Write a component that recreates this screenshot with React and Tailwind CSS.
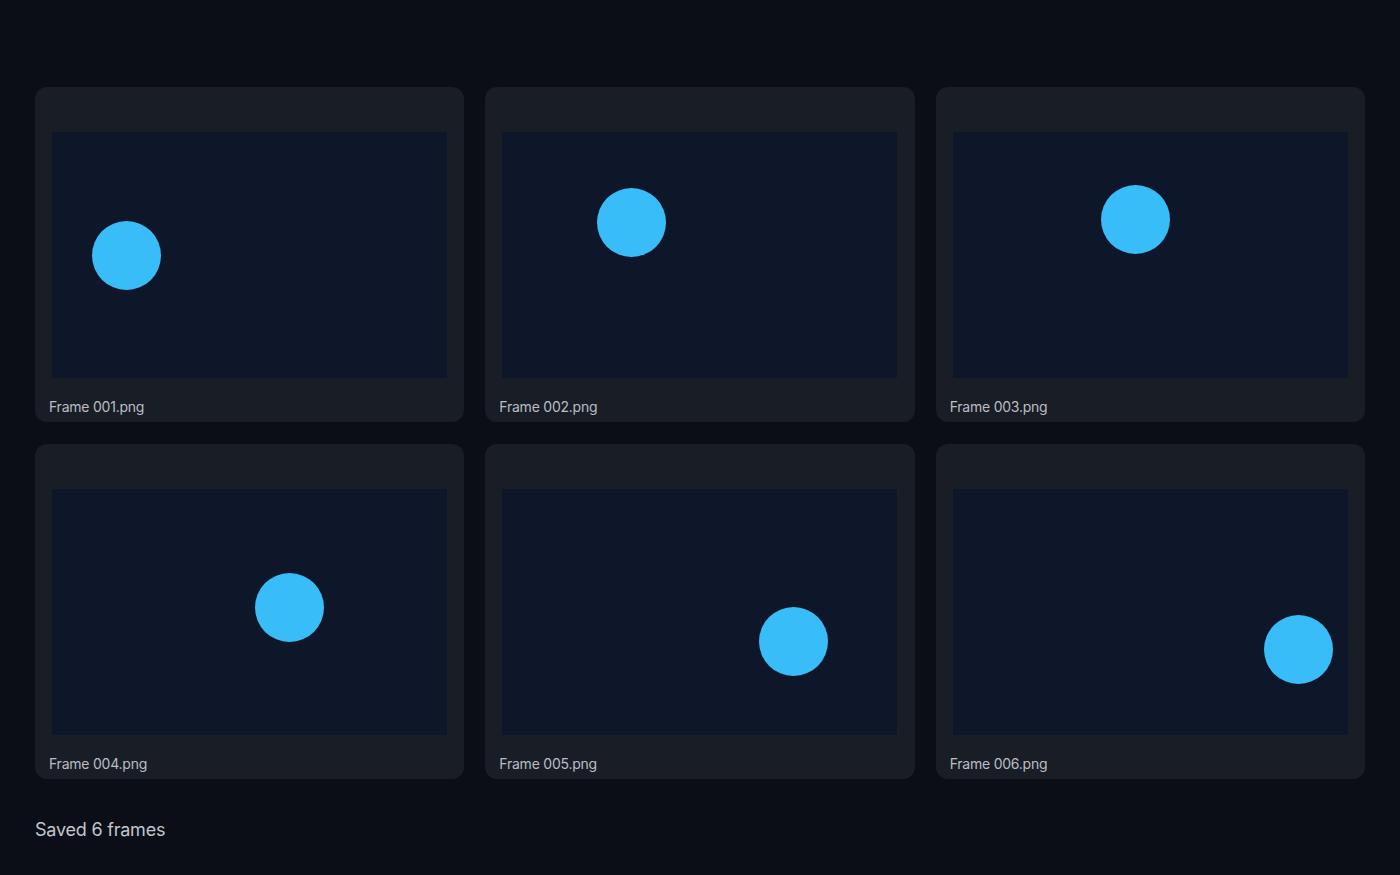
import React from 'react';

const frames = [
    { name: 'Frame 001.png', x: 74, y: 123 },
    { name: 'Frame 002.png', x: 129, y: 90 },
    { name: 'Frame 003.png', x: 183, y: 87 },
    { name: 'Frame 004.png', x: 237, y: 118 },
    { name: 'Frame 005.png', x: 291, y: 152 },
    { name: 'Frame 006.png', x: 346, y: 160 },
];

function FrameCard({ frame }) {
    return (
        <div className="bg-[#191d26] rounded-xl pt-[45px] px-[17px] h-[335px] flex flex-col">
            <div className="relative w-[395px] h-[246px] bg-[#0e1729] overflow-hidden">
                {/* ball position comes from the frame data */}
                <div
                    className="absolute w-[69px] h-[69px] rounded-full bg-[#38bdf8]"
                    style={{ left: frame.x - 34.5, top: frame.y - 34.5 }}
                />
            </div>
            <p className="mt-[19px] -ml-[3px] text-[14px] leading-5 tracking-[-0.23px] text-[#b9bdc5]">{frame.name}</p>
        </div>
    );
}

export default function App() {
    return (
        <div
            className="min-h-[875px] bg-[#0b0e16] px-[35px] pt-[87px]"
            style={{ fontFamily: 'Inter, "Noto Sans", sans-serif' }}
        >
            <div className="grid grid-cols-3 gap-x-[21px] gap-y-[22px]">
                {frames.map(f => (
                    <FrameCard key={f.name} frame={f} />
                ))}
            </div>
            <p className="mt-[37px] text-[18px] leading-7 tracking-[-0.22px] text-[#c3c6cc]">Saved 6 frames</p>
        </div>
    );
}
